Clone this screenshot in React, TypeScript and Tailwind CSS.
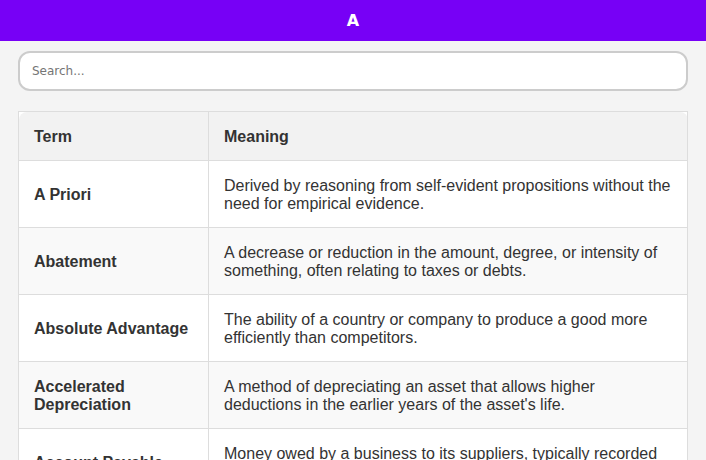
import React from "react";

const rows: [string, string][] = [
  ["A Priori", "Derived by reasoning from self-evident propositions without the need for empirical evidence."],
  ["Abatement", "A decrease or reduction in the amount, degree, or intensity of something, often relating to taxes or debts."],
  ["Absolute Advantage", "The ability of a country or company to produce a good more efficiently than competitors."],
  ["Accelerated Depreciation", "A method of depreciating an asset that allows higher deductions in the earlier years of the asset's life."],
  ["Account Payable", "Money owed by a business to its suppliers, typically recorded as a liability on the balance sheet."],
  ["Account Receivable", "Money owed to a business by its customers for goods or services delivered but not yet paid for."],
  ["Accrual Accounting", "An accounting method that records revenues and expenses when they are incurred, regardless of when cash is exchanged."],
  ["Acquisition", "The purchase of one company by another, in which the buyer gains control of the target."],
  ["Amortization", "The gradual repayment of a debt or the spreading of the cost of an intangible asset over time."],
  ["Annuity", "A financial product that pays out a fixed stream of payments to an individual, typically used for retirement."],
  ["Appreciation", "An increase in the value of an asset over time."],
  ["Arbitrage", "The simultaneous purchase and sale of an asset in different markets to profit from price differences."],
  ["Asset", "A resource with economic value that an individual or company owns with the expectation of future benefit."],
  ["Audit", "An official inspection of an organization's accounts, typically by an independent body."],
];

export default function App() {
  return (
    <div className="min-h-screen bg-[#f4f4f4]" style={{ fontFamily: '"Liberation Sans", Arial, sans-serif' }}>
      <header className="h-[41px] bg-[#7700f6] flex items-center justify-center">
        <h1 className="text-white font-bold text-[16px]" style={{ fontFamily: '"DejaVu Sans", sans-serif' }}>A</h1>
      </header>
      <div className="px-[18px] pt-[10px] pb-5">
        <input
          type="text"
          placeholder="Search..."
          className="block w-full h-[40px] bg-white border-2 border-[#cccccc] rounded-[12px] px-[12px] text-[12px] text-[#333] placeholder:text-[#757575] outline-none"
          style={{ fontFamily: '"DejaVu Sans", sans-serif' }}
        />
        <table className="mt-[20px] w-full border-collapse bg-white border border-[#dddddd] text-[16px] text-[#333333]">
          <thead>
            <tr>
              <th className="w-[190px] text-left font-bold bg-[#f2f2f2] px-[15px] pt-[16px] pb-[14px] border border-[#dddddd] rounded-tl-lg leading-[18px]">Term</th>
              <th className="text-left font-bold bg-[#f2f2f2] px-[15px] pt-[16px] pb-[14px] border border-[#dddddd] rounded-tr-lg leading-[18px]">Meaning</th>
            </tr>
          </thead>
          <tbody>
            {rows.map(([t, m], i) => (
              <tr key={t} className={i % 2 === 1 ? "bg-[#f9f9f9]" : "bg-white"}>
                <td className="font-bold px-[15px] pt-[16px] pb-[14px] border border-[#dddddd] leading-[18px] align-middle">{t}</td>
                <td className="px-[15px] pt-[16px] pb-[14px] border border-[#dddddd] leading-[18px] align-middle">{m}</td>
              </tr>
            ))}
          </tbody>
        </table>
      </div>
    </div>
  );
}
